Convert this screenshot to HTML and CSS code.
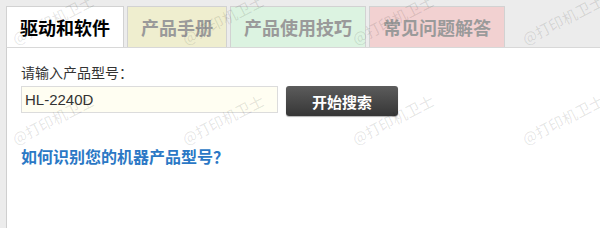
FILE: index.html
```html
<!DOCTYPE html>
<html lang="zh-CN">
<head>
<meta charset="utf-8">
<title>产品型号搜索</title>
<link rel="stylesheet" href="styles.css">
</head>
<body>
<div class="page">
  <div class="tabs">
    <div class="tab tab-active">驱动和软件</div>
    <div class="tab tab-manual">产品手册</div>
    <div class="tab tab-tips">产品使用技巧</div>
    <div class="tab tab-faq">常见问题解答</div>
  </div>
  <div class="panel">
    <div class="label">请输入产品型号：</div>
    <div class="search-row">
      <input class="model-input" type="text" value="HL-2240D">
      <button class="search-btn" type="button">开始搜索</button>
    </div>
    <a class="help-link" href="#">如何识别您的机器产品型号？</a>
  </div>
</div>
<div class="watermarks" aria-hidden="true">
  <span class="wm">@打印机卫士</span><span class="wm">@打印机卫士</span><span class="wm">@打印机卫士</span><span class="wm">@打印机卫士</span>
  <span class="wm">@打印机卫士</span><span class="wm">@打印机卫士</span><span class="wm">@打印机卫士</span><span class="wm">@打印机卫士</span>
</div>
</body>
</html>
```
FILE: styles.css
```css
html, body {
  margin: 0;
  padding: 0;
  background: #ececec;
  height: 228px;
  overflow: hidden;
}
body {
  position: relative;
  font-family: "Noto Sans CJK SC", "Liberation Sans", sans-serif;
}
.page {
  padding: 6px 0 0 6px;
  display: flex;
  flex-direction: column;
  height: 228px;
  box-sizing: border-box;
}
.tabs {
  display: flex;
  gap: 3px;
}
.tab {
  height: 40px;
  line-height: 40px;
  padding: 0 13px;
  border: 1px solid #d2d2d2;
  border-bottom: 0;
  font-size: 18px;
  font-weight: bold;
  color: #9a9a9a;
  white-space: nowrap;
}
.tab-active { background: #fff; color: #000; }
.tab-manual { background: #efeecf; }
.tab-tips { background: #dcf3e1; }
.tab-faq { background: #f2d1d1; }
.panel {
  flex: 1;
  background: #fff;
  border-top: 1px solid #d8d8d8;
  border-left: 1px solid #cfcfcf;
  padding: 14px 0 0 14px;
}
.label {
  font-size: 14px;
  line-height: 20px;
  color: #333;
}
.search-row {
  display: flex;
  align-items: flex-start;
  margin-top: 4px;
}
.model-input {
  box-sizing: border-box;
  width: 257px;
  height: 27px;
  margin: 0;
  padding: 0 3px;
  border: 1px solid #dcdcdc;
  background: #fffef2;
  font-family: "Liberation Sans", Arial, sans-serif;
  font-size: 15px;
  color: #333;
  outline: none;
}
.search-btn {
  margin: 0 0 0 8px;
  width: 112px;
  height: 30px;
  border: 0;
  border-radius: 3px;
  background: linear-gradient(#5c5c5c, #363636);
  box-shadow: 0 1px 1px rgba(0,0,0,0.3);
  color: #fff;
  font-family: "Noto Sans CJK SC", sans-serif;
  font-size: 15px;
  font-weight: bold;
  padding: 0;
}
.help-link {
  display: block;
  margin-top: 30px;
  font-size: 16px;
  line-height: 20px;
  font-weight: bold;
  color: #2b78c5;
  text-decoration: none;
}
.watermarks {
  position: absolute;
  top: 0;
  left: 0;
  right: 0;
  bottom: 0;
  overflow: hidden;
  pointer-events: none;
  display: grid;
  grid-template-columns: repeat(4, 170px);
  grid-auto-rows: 100px;
  padding: 31px 0 0 17px;
}
.wm {
  display: block;
  white-space: nowrap;
  font-size: 15px;
  line-height: 16px;
  height: 16px;
  color: rgba(0, 0, 0, 0.11);
  transform-origin: 0 100%;
  transform: rotate(-27deg);
}
```
